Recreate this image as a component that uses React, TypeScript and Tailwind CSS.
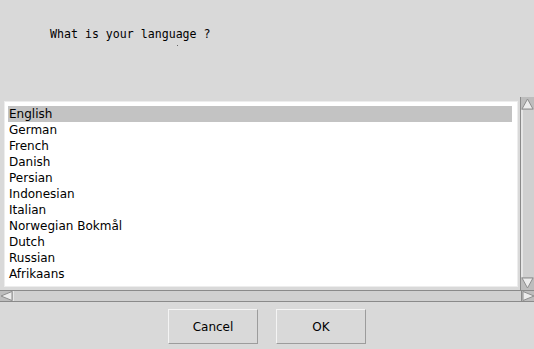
import { useState } from 'react';

const languages = [
  'English',
  'German',
  'French',
  'Danish',
  'Persian',
  'Indonesian',
  'Italian',
  'Norwegian Bokmål',
  'Dutch',
  'Russian',
  'Afrikaans',
];

function Arrow({ dir }: { dir: 'up' | 'down' }) {
  const points = dir === 'up' ? '6.5,2 12,12 1,12' : '1,1 12,1 6.5,11';
  return (
    <svg width="13" height="13" viewBox="0 0 13 13" className="block">
      <rect x="0" y="0" width="13" height="13" fill="#bdbdbd" />
      <polygon points={points} fill="#ececec" stroke="#8e8e8e" strokeWidth="1" />
    </svg>
  );
}

export default function App() {
  const [selected, setSelected] = useState(0);

  return (
    <div
      className="w-[534px] h-[349px] bg-[#d9d9d9] flex flex-col overflow-hidden"
      style={{ fontFamily: '"DejaVu Sans", sans-serif' }}
    >
      <div className="h-[97px] pl-[50px] pt-[26px] relative">
        <p className="text-[11.6px] leading-[16px] text-black font-['DejaVu_Sans_Mono',monospace]">
          What is your language ?
        </p>
        <span className="absolute left-[177px] top-[45px] w-px h-px bg-[#666]" />
      </div>

      <div className="flex h-[193px]">
        <div className="w-[520px] pl-[4px] pr-[2px] pt-[4px] pb-[3px]">
          <div className="h-full bg-white border border-[#ededed] pt-[4px] px-[3px]">
            <ul className="flex flex-col">
              {languages.map((lang, i) => (
                <li
                  key={lang}
                  onClick={() => setSelected(i)}
                  className={`h-[16px] leading-[16px] text-[12px] text-black pl-[1px] mr-[2px] ${
                    i === selected ? 'bg-[#c3c3c3]' : ''
                  }`}
                >
                  {lang}
                </li>
              ))}
            </ul>
          </div>
        </div>
        <div className="w-[14px] flex flex-col border-l border-[#8a8a8a] bg-[#d2d2d2]">
          <Arrow dir="up" />
          <div className="flex-1 border-l-2 border-[#e6e6e6] bg-[#d0d0d0]" />
          <Arrow dir="down" />
        </div>
      </div>

      <div className="h-[12px] flex border-y border-[#8a8a8a] bg-[#d2d2d2]">
        <div className="w-[13px] overflow-hidden">
          <svg width="13" height="10" viewBox="0 0 13 10" className="block">
            <rect width="13" height="10" fill="#bdbdbd" />
            <polygon points="1,5 12,0.5 12,9.5" fill="#ececec" stroke="#8e8e8e" strokeWidth="1" />
          </svg>
        </div>
        <div className="flex-1 border-l border-[#e6e6e6] bg-[#d0d0d0]" />
        <div className="w-[13px] border-l border-[#8a8a8a] overflow-hidden">
          <svg width="13" height="10" viewBox="0 0 13 10" className="block">
            <rect width="13" height="10" fill="#bdbdbd" />
            <polygon points="1,0.5 12,5 1,9.5" fill="#ececec" stroke="#8e8e8e" strokeWidth="1" />
          </svg>
        </div>
      </div>

      <div className="flex-1 flex justify-center items-start pt-[7px] gap-[18px]">
        <button className="w-[90px] h-[35px] bg-[#d9d9d9] border border-t-[#f4f4f4] border-l-[#f4f4f4] border-b-[#9c9c9c] border-r-[#9c9c9c] text-[12px] text-black">
          Cancel
        </button>
        <button className="w-[90px] h-[35px] bg-[#d9d9d9] border border-t-[#f4f4f4] border-l-[#f4f4f4] border-b-[#9c9c9c] border-r-[#9c9c9c] text-[12px] text-black">
          OK
        </button>
      </div>
    </div>
  );
}
